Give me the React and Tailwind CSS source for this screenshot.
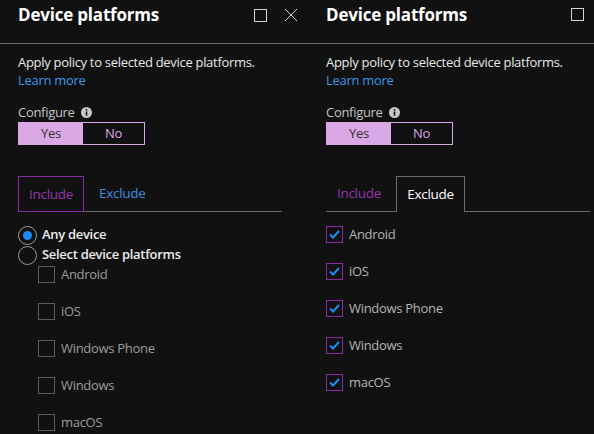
import React from "react";

const font = { fontFamily: '"Open Sans", "Noto Sans", sans-serif' };

function MaxIcon() {
  return (
    <svg width="13" height="13" viewBox="0 0 13 13" className="block">
      <rect x="0.5" y="0.5" width="12" height="12" fill="none" stroke="#d4d4d4" strokeWidth="1" />
    </svg>
  );
}

function CloseIcon() {
  return (
    <svg width="14" height="14" viewBox="0 0 14 14" className="block">
      <path d="M1 1 L13 13 M13 1 L1 13" stroke="#d4d4d4" strokeWidth="1" fill="none" />
    </svg>
  );
}

function InfoIcon() {
  return (
    <svg width="11" height="11" viewBox="0 0 11 11" className="block">
      <circle cx="5.5" cy="5.5" r="5.5" fill="#c8c8c8" />
      <rect x="4.7" y="4.5" width="1.6" height="4.2" fill="#111111" />
      <rect x="4.7" y="2.2" width="1.6" height="1.5" fill="#111111" />
    </svg>
  );
}

function Header({ close }) {
  return (
    <div className="h-[44px] shrink-0 border-b border-[#6b6b6b] flex items-start pl-[18px] pr-[10px]">
      <div className="text-[17px] leading-[24px] font-bold text-white pt-[3px] flex-1 tracking-[-0.2px]">
        Device platforms
      </div>
      <div className="flex items-center gap-[17px] pt-[8px]">
        <MaxIcon />
        {close ? <CloseIcon /> : null}
      </div>
    </div>
  );
}

function Intro() {
  return (
    <>
      <div className="pt-[9px] text-[13px] leading-[18px]">
        <div className="text-[#e8e8e8]">Apply policy to selected device platforms.</div>
        <div className="text-[#3c95e6]">Learn more</div>
      </div>
      <div className="mt-[14px] flex items-center gap-[6px] text-[13px] leading-[18px] text-[#c4c4c4]">
        <span>Configure</span>
        <InfoIcon />
      </div>
      <div className="mt-[1px] flex w-[127px] h-[23px] shrink-0 border border-[#dba8e6] text-[13px]">
        <div className="w-[64px] bg-[#dba8e6] text-[#333333] flex items-center justify-center">Yes</div>
        <div className="flex-1 text-[#dba8e6] flex items-center justify-center">No</div>
      </div>
    </>
  );
}

function Tabs({ active }) {
  return (
    <div className="mt-[31px] h-[36px] shrink-0 border-b border-[#6b6b6b] flex items-stretch text-[13.5px]">
      {active === "include" ? (
        <>
          <div className="h-[36px] border border-[#8a2ba5] px-[10px] flex items-center text-[#9236ad] w-[66px] justify-center">
            Include
          </div>
          <div className="ml-[4px] px-[11px] flex items-center text-[#3c8ee0]">Exclude</div>
        </>
      ) : (
        <>
          <div className="w-[66px] px-[11px] flex items-center text-[#9236ad]">Include</div>
          <div className="ml-[4px] h-[36px] border-t border-l border-r border-[#6b6b6b] bg-[#111111] px-[10px] w-[69px] justify-center flex items-center text-white">
            Exclude
          </div>
        </>
      )}
    </div>
  );
}

function Radio({ checked, label }) {
  return (
    <div className="flex items-center h-[18px] gap-[5px] shrink-0">
      <div className="w-[19px] h-[19px] rounded-full border-[1.5px] border-[#9a9a9a] flex items-center justify-center">
        {checked ? <div className="w-[9px] h-[9px] rounded-full bg-[#1c8cf2]" /> : null}
      </div>
      <span className="text-[13px] font-semibold text-[#ececec]">{label}</span>
    </div>
  );
}

function EmptyBox({ label }) {
  return (
    <div className="h-[37px] shrink-0 flex items-center gap-[6px]">
      <div className="w-[17px] h-[17px] border border-[#5c5c5c]" />
      <span className="text-[13px] text-[#9c9c9c]">{label}</span>
    </div>
  );
}

function CheckedBox({ label }) {
  return (
    <div className="h-[37px] shrink-0 flex items-center gap-[6px]">
      <div className="w-[17px] h-[17px] border border-[#8a2ba5] flex items-center justify-center">
        <svg width="11" height="9" viewBox="0 0 11 9" className="block">
          <path d="M1 4.5 L4 7.5 L10 1" stroke="#1c8cf2" strokeWidth="2" fill="none" />
        </svg>
      </div>
      <span className="text-[13px] text-[#b4b4b4]">{label}</span>
    </div>
  );
}

const platforms = ["Android", "iOS", "Windows Phone", "Windows", "macOS"];

export default function App() {
  return (
    <div className="w-[594px] h-[434px] bg-[#111111] flex overflow-hidden tracking-[-0.3px]" style={font}>
      <div className="w-[308px] shrink-0 flex flex-col">
        <Header close />
        <div className="pl-[18px] pr-[26px] flex flex-col">
          <Intro />
          <Tabs active="include" />
          <div className="mt-[14px] flex flex-col gap-[2px]">
            <Radio checked label="Any device" />
            <Radio label="Select device platforms" />
          </div>
          <div className="pl-[20px] -mt-[8px] flex flex-col">
            {platforms.map((p) => (
              <EmptyBox key={p} label={p} />
            ))}
          </div>
        </div>
      </div>
      <div className="flex-1 min-w-0 flex flex-col">
        <Header />
        <div className="pl-[18px] pr-[4px] flex flex-col">
          <Intro />
          <Tabs active="exclude" />
          <div className="mt-[4px] flex flex-col">
            {platforms.map((p) => (
              <CheckedBox key={p} label={p} />
            ))}
          </div>
        </div>
      </div>
    </div>
  );
}
